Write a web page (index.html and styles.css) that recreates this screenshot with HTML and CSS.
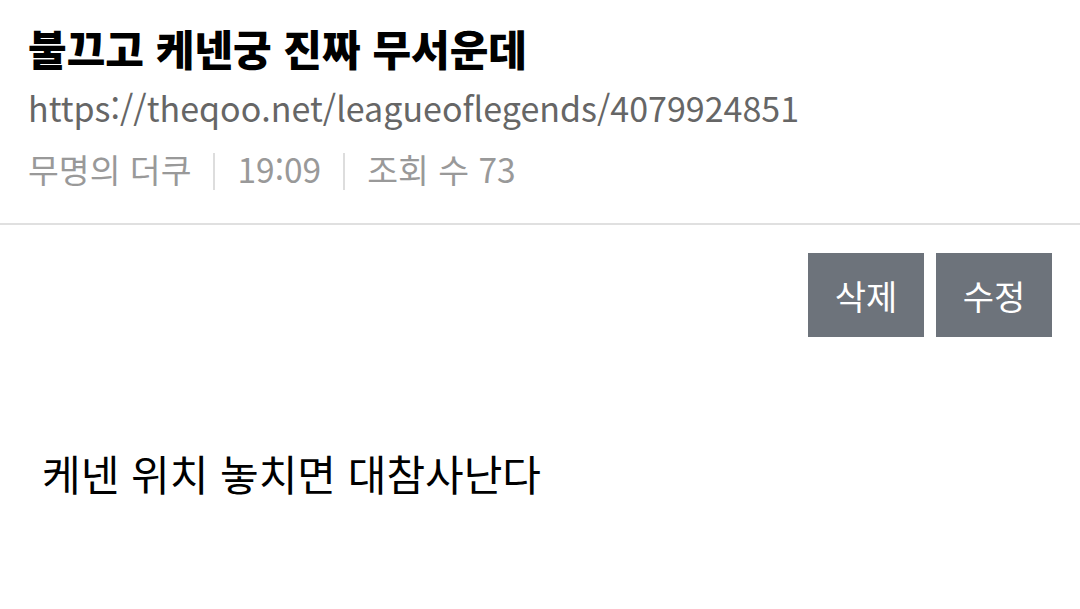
FILE: index.html
```html
<!DOCTYPE html>
<html lang="ko">
<head>
    <meta charset="UTF-8">
    <meta name="viewport" content="width=device-width, initial-scale=1.0">
    <title>불끄고 케넨궁 진짜 무서운데</title>
    <link rel="stylesheet" href="styles.css">
</head>
<body>
    <div class="post-head">
        <h1 class="post-title">불끄고 케넨궁 진짜 무서운데</h1>
        <div class="post-url">https://theqoo.net/leagueoflegends/4079924851</div>
        <div class="post-meta">
            <span>무명의 더쿠</span>
            <span class="sep"></span>
            <span>19:09</span>
            <span class="sep"></span>
            <span>조회 수 73</span>
        </div>
    </div>
    <div class="post-tools">
        <button class="btn">삭제</button>
        <button class="btn">수정</button>
    </div>
    <div class="post-body">
        <p>케넨 위치 놓치면 대참사난다</p>
    </div>
</body>
</html>
```

FILE: styles.css
```css
* {
    margin: 0;
    padding: 0;
    box-sizing: border-box;
}
body {
    background: #fff;
    font-family: "Noto Sans CJK KR", "Noto Sans", sans-serif;
    color: #000;
}
.post-head {
    padding: 20px 28px 0;
    height: 225px;
    border-bottom: 2px solid #e0e0e0;
}
.post-title {
    font-size: 42px;
    font-weight: 900;
    line-height: 56px;
}
.post-url {
    font-size: 34px;
    color: #666;
    line-height: 60px;
    margin-top: 2px;
}
.post-meta {
    display: flex;
    align-items: center;
    font-size: 33.5px;
    color: #999;
    line-height: 62px;
}
.post-meta .sep {
    width: 2px;
    height: 37px;
    background: #ddd;
    margin: 4px 22px 0;
}
.post-tools {
    display: flex;
    justify-content: flex-end;
    gap: 12px;
    padding: 28px 28px 0;
}
.btn {
    width: 116px;
    height: 84px;
    border: none;
    background: #6d737b;
    color: #fff;
    font-family: inherit;
    font-size: 34px;
}
.post-body {
    padding: 108px 42px 0;
}
.post-body p {
    font-size: 42px;
    line-height: 56px;
}
```
